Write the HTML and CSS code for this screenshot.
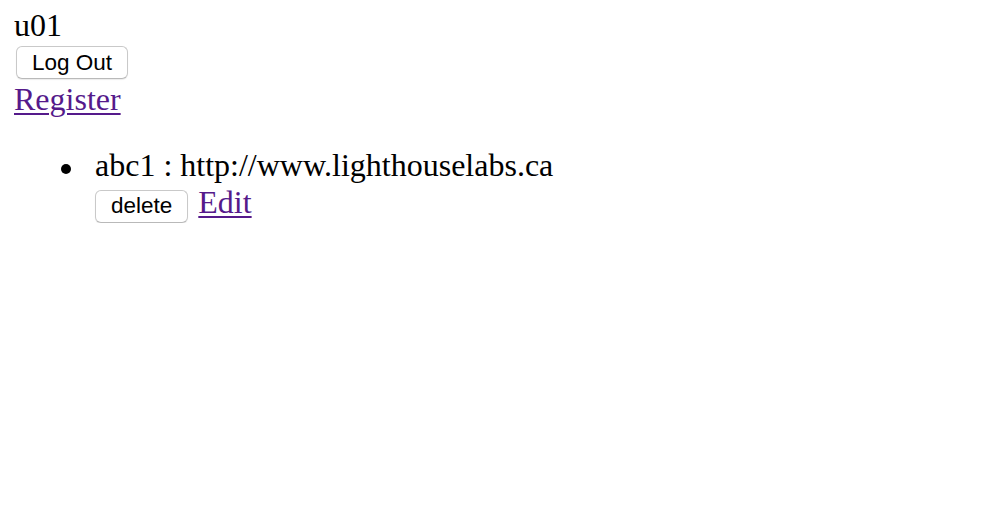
FILE: index.html
```html
<!DOCTYPE html>
<html>
<head>
<meta charset="utf-8">
<title>URLs</title>
<link rel="stylesheet" href="styles.css">
</head>
<body>
  <div class="user">u01</div>
  <form class="logout-form">
    <button type="button" class="btn">Log Out</button>
  </form>
  <a class="link" href="#register">Register</a>
  <ul class="url-list">
    <li class="url-item">
      <div class="url-line">abc1 : http://www.lighthouselabs.ca</div>
      <div class="url-actions">
        <form class="delete-form">
          <button type="button" class="btn">delete</button>
        </form>
        <a class="link edit-link" href="#edit">Edit</a>
      </div>
    </li>
  </ul>
</body>
</html>
```

FILE: styles.css
```css
html {
  background: #ffffff;
}

body {
  margin: 7px 14px;
  font-family: "Liberation Serif", "Times New Roman", serif;
  font-size: 32px;
  line-height: 37px;
  color: #000000;
}

.user {
  height: 37px;
}

.logout-form {
  margin: 0;
  padding: 2px 0;
}

.btn {
  display: block;
  margin: 0 2px;
  height: 33px;
  padding: 0 15px;
  font-family: "Liberation Sans", Arial, sans-serif;
  font-size: 22.5px;
  line-height: 24px;
  color: #000000;
  background: #ffffff;
  border: 1px solid #c9c9c9;
  border-bottom-color: #b9b9b9;
  border-radius: 6px;
  box-shadow: 0 1px 1px rgba(0, 0, 0, 0.08);
}

.link {
  display: block;
  color: #551a8b;
  text-decoration: underline;
  text-underline-offset: 3px;
  text-decoration-thickness: 2px;
}

.url-list {
  margin: 29px 0 0 0;
  padding-left: 81px;
  list-style: none;
}

.url-item {
  position: relative;
}

.url-item::before {
  content: "";
  position: absolute;
  left: -34px;
  top: 17px;
  width: 10px;
  height: 10px;
  border-radius: 50%;
  background: #000000;
}

.url-line {
  height: 37px;
}

.url-actions {
  display: flex;
  align-items: baseline;
}

.delete-form {
  margin: 0;
}

.delete-form .btn {
  margin: 0;
  padding: 0 15px;
}

.edit-link {
  margin-left: 10px;
}
```
